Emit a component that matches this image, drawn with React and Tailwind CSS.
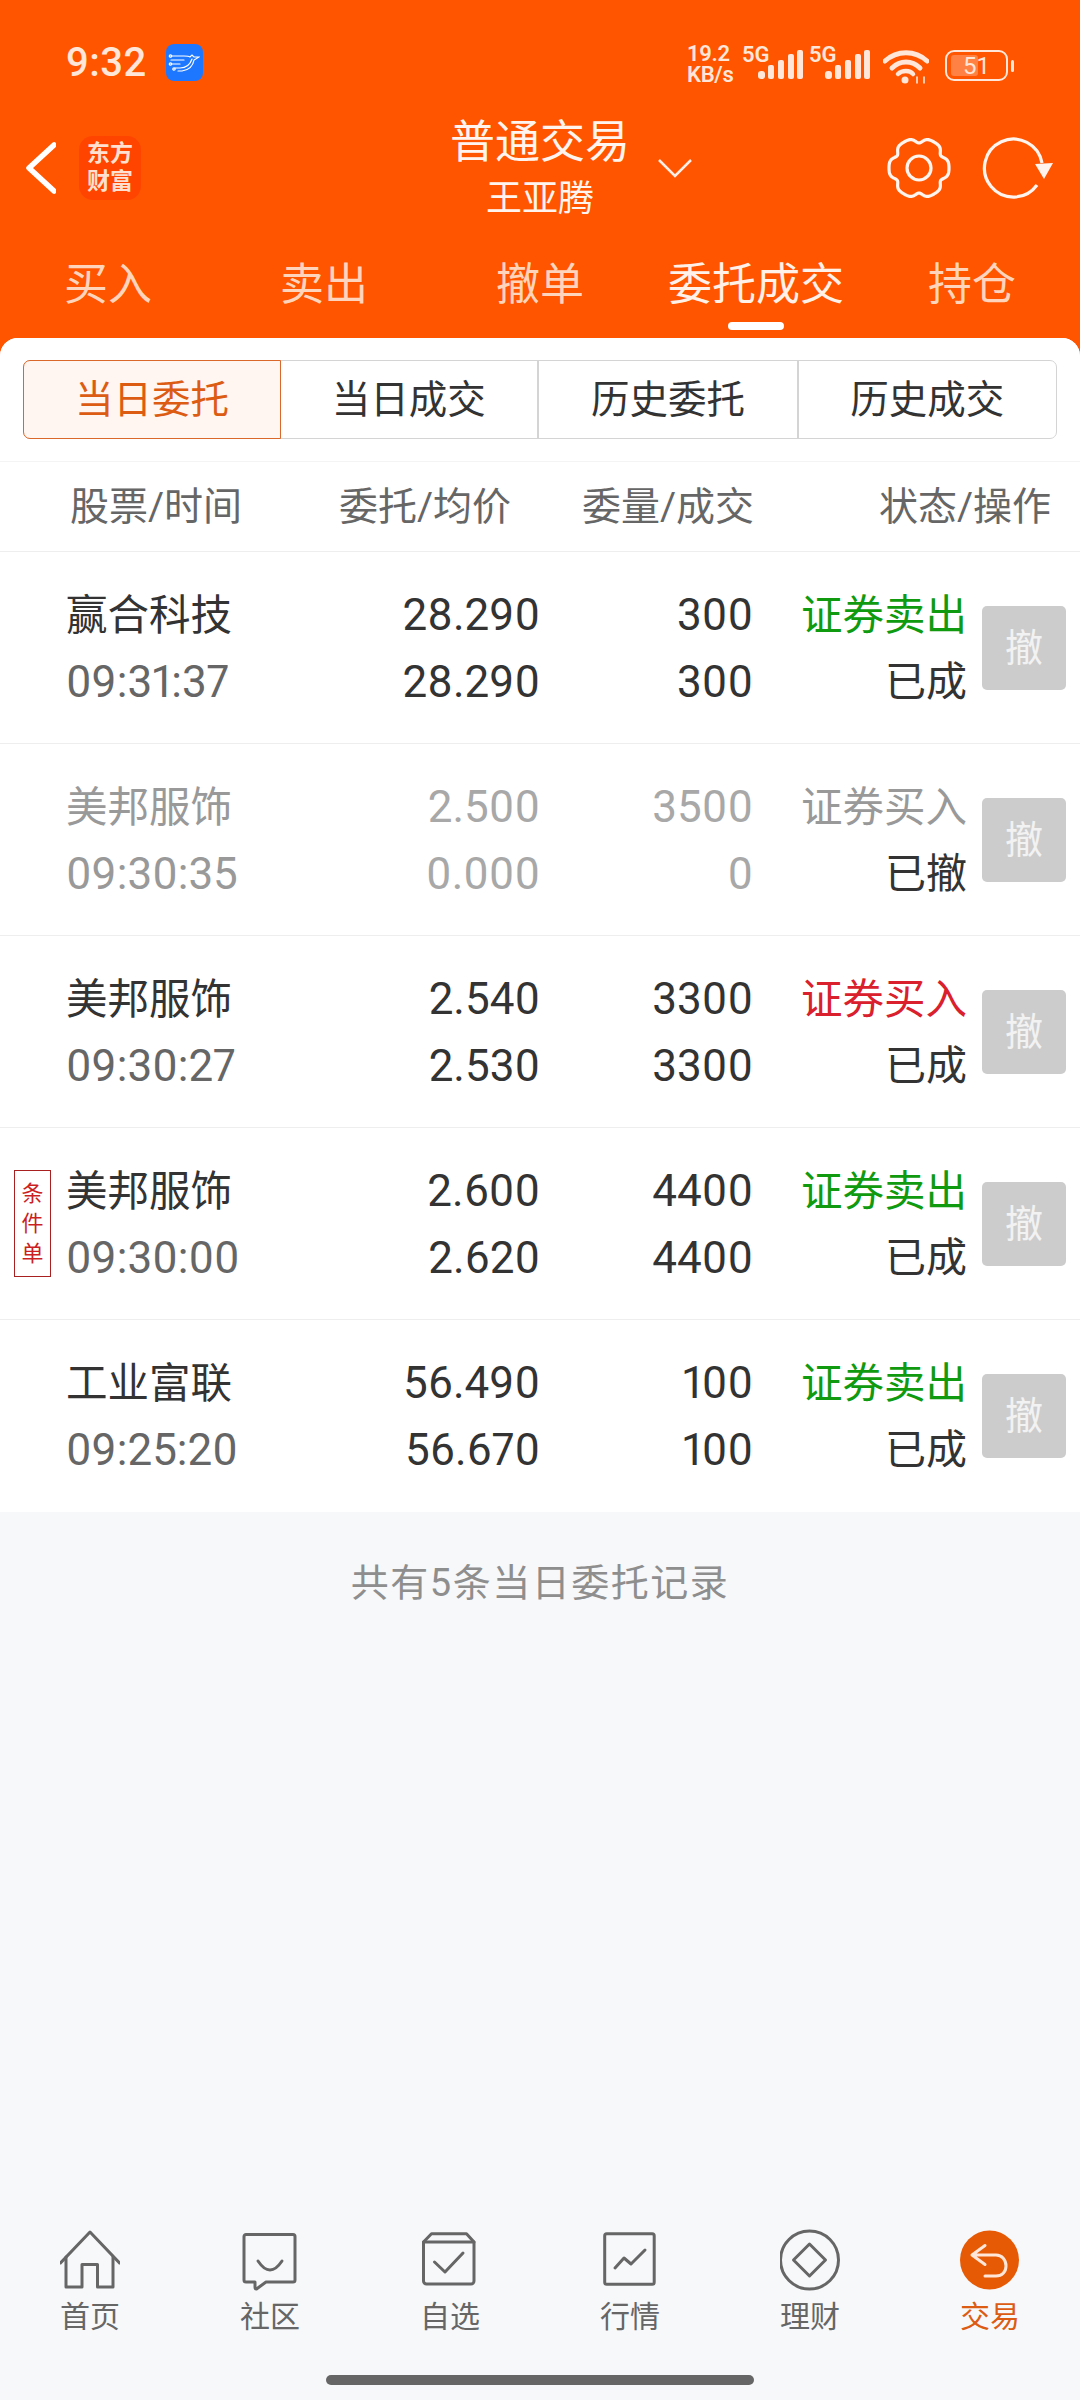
import { Fragment } from "react";

const tabs = ["买入", "卖出", "撤单", "委托成交", "持仓"];
const subTabs = ["当日委托", "当日成交", "历史委托", "历史成交"];

const orders = [
  { name: "赢合科技", time: "09:31:37", price: "28.290", avg: "28.290", qty: "300", done: "300", side: "证券卖出", status: "已成" },
  { name: "美邦服饰", time: "09:30:35", price: "2.500", avg: "0.000", qty: "3500", done: "0", side: "证券买入", status: "已撤", cancelled: true },
  { name: "美邦服饰", time: "09:30:27", price: "2.540", avg: "2.530", qty: "3300", done: "3300", side: "证券买入", status: "已成" },
  { name: "美邦服饰", time: "09:30:00", price: "2.600", avg: "2.620", qty: "4400", done: "4400", side: "证券卖出", status: "已成", conditional: true },
  { name: "工业富联", time: "09:25:20", price: "56.490", avg: "56.670", qty: "100", done: "100", side: "证券卖出", status: "已成" },
];

// six broad lobes with narrow dips, dips at top and bottom
const gearPath = (() => {
  const pts = [];
  for (let i = 0; i < 180; i++) {
    const a = (i / 180) * Math.PI * 2;
    const r = 30 - 5 * Math.pow((1 - Math.cos(6 * a)) / 2, 3);
    pts.push(`${(32 + r * Math.cos(a)).toFixed(2)} ${(32 + r * Math.sin(a)).toFixed(2)}`);
  }
  return `M${pts.join("L")}Z`;
})();

function Signal() {
  return (
    <div className="relative w-[61px] h-[36px]">
      <span className="absolute left-0 top-0 text-[22px] leading-[24px] font-semibold">5G</span>
      <svg width="45" height="29" viewBox="0 0 45 29" className="absolute right-0 bottom-0" fill="currentColor">
        <rect x="0" y="21" width="7" height="8" rx="3" />
        <rect x="10" y="15" width="6" height="14" rx="2" />
        <rect x="20" y="10" width="6" height="19" rx="2" />
        <rect x="30" y="4" width="6" height="25" rx="2" />
        <rect x="39" y="0" width="6" height="29" rx="2" />
      </svg>
    </div>
  );
}

function StatusBar() {
  return (
    <div className="h-[112px] flex items-start pl-[66px] text-[#ffe6d8]">
      <span className="mt-[39px] text-[40px] leading-[48px] font-medium tracking-[0.5px]">9:32</span>
      <div className="mt-[44px] ml-[19px] w-[37px] h-[37px] rounded-[8px] bg-[#1e78ff] flex items-center justify-center">
        <svg width="32" height="22" viewBox="0 0 32 22" fill="none" stroke="#fff" strokeWidth="1.2" strokeLinecap="round">
          <path d="M3 4H16C19 4 21 4 22 5L24 3L26 5H31L26 8C25 14 21 18 14 19H10" />
          <path d="M3 8H16M3 12H12M7 16H12M12 16C18 16 22 13 24 7" />
          <circle cx="2.5" cy="4" r="1.2" />
          <circle cx="2.5" cy="12" r="1.2" />
          <circle cx="6" cy="17" r="1.2" />
        </svg>
      </div>
      <div className="ml-auto mr-[66px] mt-[43px] flex items-start">
        <div className="w-[55px] text-[22px] leading-[21px] font-semibold tracking-[-0.3px]">
          <div>19.2</div>
          <div>KB/s</div>
        </div>
        <Signal />
        <div className="ml-[6px]">
          <Signal />
        </div>
        <svg width="46" height="36" viewBox="0 0 46 36" fill="none" stroke="currentColor" strokeLinecap="round" className="ml-[13px] mt-[5px]">
          <path d="M2 13C14 2 32 2 44 13" strokeWidth="5" />
          <path d="M9 20C17 12 29 12 37 20" strokeWidth="5" />
          <path d="M15 26C19 22 27 22 30 26" strokeWidth="4.5" />
          <circle cx="22" cy="32" r="3.5" fill="currentColor" stroke="none" />
          <path d="M34 29V35M41 29V35" strokeWidth="1.6" />
        </svg>
        <div className="ml-[16px] mt-[7px] relative w-[63px] h-[31px] rounded-[9px] border-[2.5px] border-[#ffe6d8] flex items-center justify-center overflow-hidden">
          <div className="absolute left-[4px] top-[3px] bottom-[3px] w-[27px] rounded-[3px] bg-[#ff8244]" />
          <span className="relative text-[24px] leading-[26px]">51</span>
        </div>
        <div className="ml-[3px] mt-[17px] w-[3px] h-[12px] rounded-full bg-[#ffe6d8]" />
      </div>
    </div>
  );
}

function TopBar() {
  return (
    <div className="h-[112px] flex items-center text-white">
      <div className="w-[450px] flex items-center pl-[26px]">
        <svg width="30" height="52" viewBox="0 0 30 52" fill="none" stroke="#fff" strokeWidth="5.5" strokeLinecap="round" strokeLinejoin="round">
          <path d="M28 3L3 26L28 49" />
        </svg>
        <div className="ml-[23px] w-[62px] h-[64px] rounded-[14px] bg-[#ff4400] flex flex-col items-center justify-center text-[#ffe0d0] text-[23px] leading-[28px] font-bold">
          <span>东方</span>
          <span>财富</span>
        </div>
      </div>
      <div className="w-[180px] pt-[5px] text-center whitespace-nowrap text-[#fff4ee]">
        <div className="text-[45px] leading-[56px]">普通交易</div>
        <div className="text-[36px] leading-[56px]">王亚腾</div>
      </div>
      <svg width="36" height="20" viewBox="0 0 36 20" fill="none" stroke="#ffeee5" strokeWidth="2.5" className="ml-[27px]">
        <path d="M2 2L18 18L34 2" />
      </svg>
      <svg width="64" height="64" viewBox="0 0 64 64" fill="none" stroke="#fff4ee" strokeWidth="3.2" className="ml-auto">
        <path d={gearPath} strokeLinejoin="round" />
        <circle cx="32" cy="32" r="12" />
      </svg>
      <svg width="76" height="70" viewBox="0 0 76 70" fill="none" className="ml-[30px] mr-[23px] mb-[6px]">
        <path d="M56 55A29 29 0 1 1 61 33" stroke="#fff4ee" strokeWidth="3.2" />
        <path d="M54 34L72 33L63 49Z" fill="#fff4ee" />
      </svg>
    </div>
  );
}

function TabBar() {
  return (
    <div className="mt-[8px] h-[102px] flex">
      {tabs.map((t, i) => (
        <div key={t} className="relative flex-1 flex items-center justify-center">
          <span className={`pt-[3px] text-[44px] leading-[52px] ${i === 3 ? "text-[#fff0e8]" : "text-[#ffd4bc]"}`}>{t}</span>
          {i === 3 && <div className="absolute left-[80px] top-[90px] w-[56px] h-[8px] rounded-full bg-white" />}
        </div>
      ))}
    </div>
  );
}

function OrderRow({ o, last }) {
  const sideColor = o.cancelled
    ? "text-[#999999]"
    : o.side === "证券买入"
      ? "text-[#d9202c]"
      : "text-[#0f9a0f]";
  const valueColor = o.cancelled ? "text-[#a8a8a8]" : "text-[#333333]";

  return (
    <div className={`relative h-[192px] pt-[2px] flex items-center text-[44px] leading-[67px] proportional-nums ${last ? "" : "border-b border-[#eeeeee]"}`}>
      {o.conditional && (
        <div className="absolute left-[14px] top-[42px] w-[37px] h-[107px] border border-[#a82020] flex flex-col items-center justify-center text-[22px] leading-[30px] text-[#cc1f1f]">
          <span>条</span>
          <span>件</span>
          <span>单</span>
        </div>
      )}
      <div className="w-[400px] pl-[66px]">
        <div className={`text-[41.5px] ${o.cancelled ? "text-[#999999]" : "text-[#333333]"}`}>{o.name}</div>
        <div className={o.cancelled ? "text-[#999999]" : "text-[#666666]"}>{o.time}</div>
      </div>
      <div className={`w-[140px] text-right ${valueColor}`}>
        <div>{o.price}</div>
        <div>{o.avg}</div>
      </div>
      <div className={`w-[213px] text-right ${valueColor}`}>
        <div>{o.qty}</div>
        <div>{o.done}</div>
      </div>
      <div className="w-[214px] text-right text-[#333333]">
        <div className={`text-[41.5px] ${sideColor}`}>{o.side}</div>
        <div className="text-[41px]">{o.status}</div>
      </div>
      <div className="-mt-[2px] ml-[15px] w-[84px] h-[84px] rounded-[5px] bg-[#cccccc] flex items-center justify-center text-[38px] leading-[40px] text-[#f2f2f2]">
        撤
      </div>
    </div>
  );
}

function OrderPanel() {
  return (
    <div className="flex-1 rounded-t-[18px] bg-[#f7f8fa] overflow-hidden">
      <div className="bg-white">
        <div className="pt-[22px] pb-[22px] px-[23px]">
          <div className="h-[79px] flex rounded-[7px] border border-[#d4d4d4]">
            {subTabs.map((t, i) => (
              <Fragment key={t}>
                <div
                  className={
                    i === 0
                      ? "-m-px w-[258px] rounded-l-[7px] border border-[#d9682a] bg-[#fff6f2] text-[#dc5c14] text-[38.5px] flex items-center justify-center"
                      : `flex-1 text-[#333333] text-[38.5px] flex items-center justify-center ${i > 1 ? "border-l-2 border-[#d4d4d4]" : ""}`
                  }
                >
                  {t}
                </div>
              </Fragment>
            ))}
          </div>
        </div>
        <div className="h-[91px] pt-[1px] flex items-center border-y border-t-[#f4f4f4] border-b-[#eeeeee] text-[39px] text-[#666666]">
          <div className="w-[300px] pl-[70px]">股票/时间</div>
          <div className="w-[211px] text-right">委托/均价</div>
          <div className="w-[243px] text-right">委量/成交</div>
          <div className="w-[297px] text-right">状态/操作</div>
        </div>
        {orders.map((o, i) => (
          <OrderRow key={o.time} o={o} last={i === orders.length - 1} />
        ))}
      </div>
      <div className="mt-[47px] text-center text-[38px] leading-[48px] tracking-[1.5px] text-[#8e8e8e]">共有5条当日委托记录</div>
    </div>
  );
}

function NavIcon({ children }) {
  return (
    <svg width="60" height="64" viewBox="0 0 60 64" fill="none" stroke="#666666" strokeWidth="3" strokeLinejoin="round" strokeLinecap="round">
      {children}
    </svg>
  );
}

const navItems = [
  {
    label: "首页",
    icon: (
      <NavIcon>
        <path d="M0.5 35L30 4L59.5 35" />
        <path d="M6 29V59H22V36.5H37.5V59H53V29" />
      </NavIcon>
    ),
  },
  {
    label: "社区",
    icon: (
      <NavIcon>
        <path d="M6 6.5H53A2 2 0 0 1 55 8.5V52A2 2 0 0 1 53 54H26L16.5 61Q15 61 15 59V54H6A2 2 0 0 1 4 52V8.5A2 2 0 0 1 6 6.5Z" />
        <path d="M18 33Q30 51 42 33" />
      </NavIcon>
    ),
  },
  {
    label: "自选",
    icon: (
      <NavIcon>
        <path d="M3.5 14V53A3 3 0 0 0 6.5 56H51A3 3 0 0 0 54 53V14L46.5 5.7H11.5Z" />
        <path d="M3.5 14H54" />
        <path d="M14.5 34L25 44L43 25" />
      </NavIcon>
    ),
  },
  {
    label: "行情",
    icon: (
      <NavIcon>
        <rect x="4.7" y="5.7" width="49.5" height="50.5" rx="2" />
        <path d="M15 40L24 30L31 36L45 22" />
      </NavIcon>
    ),
  },
  {
    label: "理财",
    icon: (
      <NavIcon>
        <circle cx="29.5" cy="32" r="29" />
        <path d="M29.5 16L45.5 32L29.5 48L13.5 32Z" />
      </NavIcon>
    ),
  },
  {
    label: "交易",
    active: true,
    icon: (
      <NavIcon>
        <circle cx="29.5" cy="32" r="29.5" fill="#e65a05" stroke="none" />
        <path d="M25 17.5L12 27L25 36.5M12 27H36C42 27 46 32 46 38C46 44 42 48 36 48H25" stroke="#ffe6d8" />
      </NavIcon>
    ),
  },
];

function BottomNav() {
  return (
    <div className="h-[172px] bg-[#f7f8fa]">
      <div className="flex">
        {navItems.map((n) => (
          <div key={n.label} className="w-[180px] flex flex-col items-center">
            {n.icon}
            <span className={`mt-[5px] text-[30px] leading-[40px] ${n.active ? "text-[#dc5c14]" : "text-[#666666]"}`}>{n.label}</span>
          </div>
        ))}
      </div>
      <div className="mt-[38px] mx-auto w-[428px] h-[10px] rounded-full bg-[#666666]" />
    </div>
  );
}

export default function App() {
  return (
    <div className="w-[1080px] h-[2400px] flex flex-col bg-[#ff5500] font-['Roboto','Noto_Sans_CJK_SC',sans-serif]">
      <StatusBar />
      <TopBar />
      <TabBar />
      <div className="h-[4px]" />
      <OrderPanel />
      <BottomNav />
    </div>
  );
}
